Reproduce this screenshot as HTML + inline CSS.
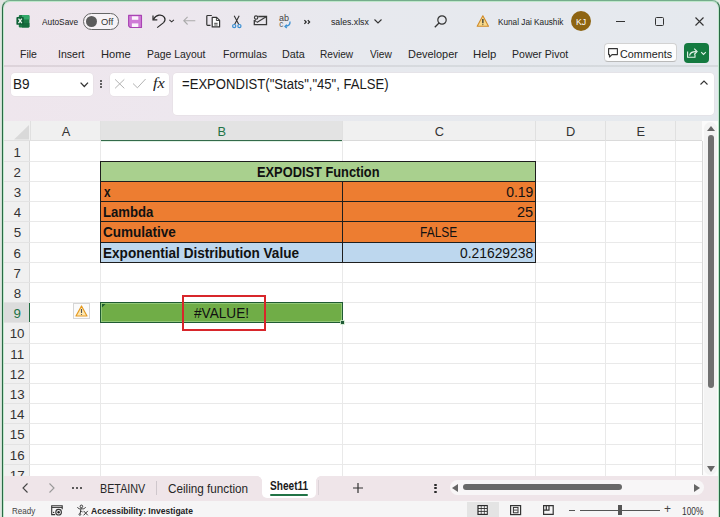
<!DOCTYPE html><html><head><meta charset="utf-8"><style>
*{box-sizing:border-box;margin:0;padding:0}
html,body{width:720px;height:517px;overflow:hidden;background:#f4f4f4;font-family:"Liberation Sans",sans-serif;color:#222}
.a{position:absolute}
.t{position:absolute;white-space:nowrap;line-height:1}
svg{position:absolute;overflow:visible}
</style></head><body>
<div class="a" style="left:0;top:0;width:720px;height:517px;background:linear-gradient(90deg,#efe6ed 0%,#ede7ee 25%,#e7e9ee 50%,#e5e9ee 100%)"></div>
<svg style="left:0;top:0" width="40" height="40" viewBox="0 0 40 40"><rect x="18.8" y="14.9" width="10.6" height="12.5" rx="1.2" fill="#1b7a45"/><path d="M22 14.9 H28.2 A1.2 1.2 0 0 1 29.4 16.1 V19.5 H22 Z" fill="#33a86a"/><path d="M22 23 H29.4 V26.2 A1.2 1.2 0 0 1 28.2 27.4 H22 Z" fill="#136b3b"/><rect x="16.4" y="17" width="7.4" height="7.8" rx="0.9" fill="#0f6136"/><path d="M18.5 18.6 L21.8 23.2 M21.8 18.6 L18.5 23.2" stroke="#eef8f1" stroke-width="1.3"/></svg>
<div class="t" style="left:42.40px;top:17.00px;font-size:9.4px;font-weight:400;color:#222;font-family:'Liberation Sans';font-style:normal;transform:scaleX(0.8878);transform-origin:0 0;">AutoSave</div>
<div class="a" style="left:82.8px;top:13.1px;width:35.8px;height:16.7px;border:1px solid #666;border-radius:9px;background:#f7f3f6"></div>
<div class="a" style="left:85.8px;top:16px;width:11px;height:11px;border-radius:6px;background:#5c5c5c"></div>
<div class="t" style="left:100.66px;top:18.00px;font-size:8.8px;font-weight:400;color:#333;font-family:'Liberation Sans';font-style:normal;transform:scaleX(1.0631);transform-origin:0 0;">Off</div>
<svg style="left:0;top:0" width="180" height="40" viewBox="0 0 180 40"><path d="M128.6 15.4 H141.5 V27.5 H130.2 L128.6 25.9 Z" fill="#cf7ad6" stroke="#a944b3" stroke-width="1.1" stroke-linejoin="round"/><rect x="131.9" y="16.3" width="6.4" height="3.5" fill="#fbf3fb"/><rect x="131.9" y="23.4" width="6.4" height="3.6" fill="#fbf3fb"/><path d="M153 15.5 V19.8 H157.3" fill="none" stroke="#2a2a2a" stroke-width="1.2"/><path d="M153.4 19.4 C156 14.6 162 13.6 164.4 17.4 C165.5 19.3 165.1 21.1 163.6 22.6 L157.2 27.6" fill="none" stroke="#2a2a2a" stroke-width="1.2"/><path d="M169.4 19.8 L171.65 21.8 L173.9 19.8" fill="none" stroke="#333" stroke-width="1.1"/></svg>
<svg style="left:0;top:0" width="250" height="40" viewBox="0 0 250 40"><path d="M195.3 20.7 H183.8 M187.6 16.9 L183.8 20.7 L187.6 24.5" fill="none" stroke="#ababab" stroke-width="1.1"/><path d="M211.8 15.5 H207.6 Q206.8 15.5 206.8 16.3 V24.5 Q206.8 25.3 207.6 25.3 H210.5" fill="none" stroke="#333" stroke-width="1.2"/><path d="M212.2 17.3 H216.6 L219.6 20.3 V26.9 H212.2 Z" fill="#fff" stroke="#333" stroke-width="1.2" stroke-linejoin="round"/><path d="M216.4 17.3 V20.5 H219.6 M214.2 23.3 H217.6 M214.2 25 H217.6" fill="none" stroke="#333" stroke-width="0.9"/><path d="M234.2 15.8 L238.8 24.6 M239.2 15.8 L234.6 24.6" fill="none" stroke="#333" stroke-width="1.1"/><circle cx="234.2" cy="26.1" r="1.6" fill="none" stroke="#3a8fd2" stroke-width="1.2"/><circle cx="239.4" cy="26.1" r="1.6" fill="none" stroke="#3a8fd2" stroke-width="1.2"/></svg>
<svg style="left:0;top:0" width="280" height="40" viewBox="0 0 280 40"><path d="M258.2 16.5 H266.5 V24.6 H254.3 V20" fill="none" stroke="#3a3a3a" stroke-width="1.3"/><path d="M256.8 22.6 L266.2 16.8" stroke="#3a3a3a" stroke-width="1.2"/><circle cx="256.1" cy="17.6" r="1.7" fill="none" stroke="#3a3a3a" stroke-width="1.1"/><path d="M255.4 19.4 V21.6 H256.8" fill="none" stroke="#3a3a3a" stroke-width="0.9"/></svg>
<svg style="left:0;top:0" width="320" height="40" viewBox="0 0 320 40"><text x="278.9" y="21.2" font-size="8.2" font-family="Liberation Sans" fill="#444" textLength="10" lengthAdjust="spacingAndGlyphs">ab</text><text x="279.2" y="27.3" font-size="8.2" font-family="Liberation Sans" fill="#555">c</text><path d="M290 21.5 C290.3 24.5 288.5 26.2 285.2 26.4 M286.8 24.6 L285 26.4 L286.8 28" fill="none" stroke="#3a8fd2" stroke-width="1.3"/><path d="M304.4 20.2 L306.2 22 L304.4 23.8 M307.8 20.2 L309.6 22 L307.8 23.8" fill="none" stroke="#222" stroke-width="1.2"/></svg>
<div class="t" style="left:331.46px;top:18.00px;font-size:9.3px;font-weight:400;color:#222;font-family:'Liberation Sans';font-style:normal;transform:scaleX(0.9386);transform-origin:0 0;">sales.xlsx</div>
<svg style="left:374px;top:19px" width="8" height="5" viewBox="0 0 8 5"><path d="M0.5 0.5 L4 4 L7.5 0.5" fill="none" stroke="#333" stroke-width="1.1"/></svg>
<svg style="left:434px;top:15px" width="13" height="13" viewBox="0 0 13 13"><circle cx="8" cy="5" r="4.2" fill="none" stroke="#333" stroke-width="1.2"/><path d="M5 8 L0.8 12.2" stroke="#333" stroke-width="1.3"/></svg>
<svg style="left:0;top:0" width="500" height="40" viewBox="0 0 500 40"><path d="M482.85 15.8 L488.5 26.2 H477.2 Z" fill="#f8d98a" stroke="#cf8a2a" stroke-width="1.1" stroke-linejoin="round"/><path d="M482.85 19 V23.2" stroke="#4a4a3a" stroke-width="1.5"/><circle cx="482.85" cy="24.6" r="0.6" fill="#4a4a3a"/></svg>
<div class="t" style="left:497.76px;top:18.00px;font-size:9.2px;font-weight:400;color:#222;font-family:'Liberation Sans';font-style:normal;transform:scaleX(0.8945);transform-origin:0 0;">Kunal Jai Kaushik</div>
<div class="a" style="left:571px;top:11px;width:20px;height:20px;border-radius:10px;background:#8e6412"></div>
<div class="t" style="left:575.81px;top:18.00px;font-size:8.6px;font-weight:400;color:#fff;font-family:'Liberation Sans';font-style:normal;transform:scaleX(1.0196);transform-origin:0 0;">KJ</div>
<div class="a" style="left:616px;top:21px;width:9px;height:1px;background:#333"></div>
<div class="a" style="left:655px;top:17px;width:9px;height:8.5px;border:1.1px solid #333;border-radius:1.5px"></div>
<svg style="left:695px;top:17px" width="9" height="9" viewBox="0 0 9 9"><path d="M0.5 0.5 L8.5 8.5 M8.5 0.5 L0.5 8.5" stroke="#333" stroke-width="1.1"/></svg>
<div class="t" style="left:20.18px;top:49.00px;font-size:10.9px;font-weight:400;color:#242424;font-family:'Liberation Sans';font-style:normal;transform:scaleX(0.9650);transform-origin:0 0;">File</div>
<div class="t" style="left:58.47px;top:49.00px;font-size:10.9px;font-weight:400;color:#242424;font-family:'Liberation Sans';font-style:normal;transform:scaleX(0.9718);transform-origin:0 0;">Insert</div>
<div class="t" style="left:101.43px;top:49.00px;font-size:10.9px;font-weight:400;color:#242424;font-family:'Liberation Sans';font-style:normal;transform:scaleX(1.0222);transform-origin:0 0;">Home</div>
<div class="t" style="left:147.49px;top:49.00px;font-size:10.9px;font-weight:400;color:#242424;font-family:'Liberation Sans';font-style:normal;transform:scaleX(0.9553);transform-origin:0 0;">Page Layout</div>
<div class="t" style="left:222.67px;top:49.00px;font-size:10.9px;font-weight:400;color:#242424;font-family:'Liberation Sans';font-style:normal;transform:scaleX(0.9721);transform-origin:0 0;">Formulas</div>
<div class="t" style="left:282.16px;top:49.00px;font-size:10.9px;font-weight:400;color:#242424;font-family:'Liberation Sans';font-style:normal;transform:scaleX(0.9891);transform-origin:0 0;">Data</div>
<div class="t" style="left:319.71px;top:49.00px;font-size:10.9px;font-weight:400;color:#242424;font-family:'Liberation Sans';font-style:normal;transform:scaleX(0.9280);transform-origin:0 0;">Review</div>
<div class="t" style="left:370.00px;top:49.00px;font-size:10.9px;font-weight:400;color:#242424;font-family:'Liberation Sans';font-style:normal;transform:scaleX(0.9337);transform-origin:0 0;">View</div>
<div class="t" style="left:407.64px;top:49.00px;font-size:10.9px;font-weight:400;color:#242424;font-family:'Liberation Sans';font-style:normal;transform:scaleX(1.0045);transform-origin:0 0;">Developer</div>
<div class="t" style="left:473.11px;top:49.00px;font-size:10.9px;font-weight:400;color:#242424;font-family:'Liberation Sans';font-style:normal;transform:scaleX(1.0415);transform-origin:0 0;">Help</div>
<div class="t" style="left:512.18px;top:49.00px;font-size:10.9px;font-weight:400;color:#242424;font-family:'Liberation Sans';font-style:normal;transform:scaleX(0.9679);transform-origin:0 0;">Power Pivot</div>
<div class="a" style="left:604px;top:43.3px;width:72.6px;height:19.2px;border:1px solid #d2d2d2;border-bottom-color:#b9b9b9;border-radius:4px;background:#fdfdfd"></div>
<svg style="left:608px;top:48px" width="10" height="10" viewBox="0 0 10 10"><path d="M0.6 0.6 H9.4 V6.6 H4 L1.5 9 V6.6 H0.6 Z" fill="none" stroke="#333" stroke-width="1.1" stroke-linejoin="round"/></svg>
<div class="t" style="left:620.19px;top:49.00px;font-size:10.9px;font-weight:400;color:#242424;font-family:'Liberation Sans';font-style:normal;transform:scaleX(0.9895);transform-origin:0 0;">Comments</div>
<div class="a" style="left:683.5px;top:43px;width:25.7px;height:19.6px;border-radius:4px;background:#147a40"></div>
<svg style="left:0;top:0" width="720" height="70" viewBox="0 0 720 70"><path d="M687.6 51.5 V57.3 H695 V54.6" fill="none" stroke="#e6f4ea" stroke-width="1.1"/><path d="M689.6 55.6 Q690 51.6 696 51.6" fill="none" stroke="#e6f4ea" stroke-width="1.1"/><path d="M694.2 48.7 L697.1 51.6 L694.2 54.5" fill="none" stroke="#e6f4ea" stroke-width="1.1"/><path d="M701.2 52.2 L703.5 54.4 L705.8 52.2" fill="none" stroke="#e6f4ea" stroke-width="1.1"/></svg>
<div class="a" style="left:0;top:65px;width:720px;height:1.6px;background:linear-gradient(90deg,#ddd3da 0%,#dbd6dd 35%,#d6dade 60%,#d5d9dd 100%)"></div>
<div class="a" style="left:10.5px;top:72.5px;width:82px;height:23px;background:#fff;border-radius:4px;box-shadow:0 0 0 0.5px #e4dde2"></div>
<div class="t" style="left:13.34px;top:78.00px;font-size:13.8px;font-weight:400;color:#1a1a1a;font-family:'Liberation Sans';font-style:normal;transform:scaleX(0.9841);transform-origin:0 0;">B9</div>
<svg style="left:80px;top:81.8px" width="9" height="6" viewBox="0 0 9 6"><path d="M0.6 0.6 L4.3 4.5 L8 0.6" fill="none" stroke="#333" stroke-width="1.25"/></svg>
<div class="a" style="left:100.2px;top:79.7px;width:1.9px;height:1.9px;background:#333;border-radius:1px"></div>
<div class="a" style="left:100.2px;top:83.0px;width:1.9px;height:1.9px;background:#333;border-radius:1px"></div>
<div class="a" style="left:100.2px;top:86.3px;width:1.9px;height:1.9px;background:#333;border-radius:1px"></div>
<div class="a" style="left:110px;top:72.5px;width:59px;height:23px;background:#fff;border-radius:4px;box-shadow:0 0 0 0.5px #e4dde2"></div>
<svg style="left:0;top:0" width="170" height="100" viewBox="0 0 170 100"><path d="M115.1 79.4 L124.3 88.3 M124.3 79.4 L115.1 88.3" stroke="#b3b3b3" stroke-width="1"/><path d="M133 83.5 L137.4 87.8 L145.6 79" fill="none" stroke="#b3b3b3" stroke-width="1"/></svg>
<div class="t" style="left:153.30px;top:76.00px;font-size:14.5px;font-weight:400;color:#222;font-family:'Liberation Serif';font-style:italic;transform:scaleX(1.1280);transform-origin:0 0;">fx</div>
<div class="a" style="left:173px;top:73px;width:541px;height:42px;background:#fff;border-radius:4px;box-shadow:0 0 0 0.5px #e4dde2"></div>
<div class="t" style="left:182.49px;top:78.00px;font-size:13.8px;font-weight:400;color:#1a1a1a;font-family:'Liberation Sans';font-style:normal;transform:scaleX(0.9488);transform-origin:0 0;">=EXPONDIST("Stats","45", FALSE)</div>
<svg style="left:700px;top:80px" width="8" height="5" viewBox="0 0 8 5"><path d="M0.5 4.5 L4 1 L7.5 4.5" fill="none" stroke="#333" stroke-width="1.1"/></svg>
<div class="a" style="left:4px;top:141px;width:698px;height:335px;background:#fff"></div>
<div class="a" style="left:4px;top:121px;width:698px;height:20px;background:#f0f0f0"></div>
<div class="a" style="left:100px;top:121px;width:242px;height:20px;background:#e3e3e3"></div>
<div class="a" style="left:100px;top:139.9px;width:242px;height:1.6px;background:#336a4a;box-shadow:0 0.8px 0.6px #d8eedd"></div>
<svg style="left:14px;top:124.5px" width="15" height="14.5" viewBox="0 0 15 14.5"><path d="M15 0 V14.5 H0 Z" fill="#d9d9d9"/></svg>
<div class="a" style="left:4px;top:140px;width:96px;height:1px;background:#e0e0e0"></div>
<div class="a" style="left:342px;top:140px;width:360px;height:1px;background:#dadada"></div>
<div class="a" style="left:30px;top:121px;width:1px;height:20px;background:#e0e0e0"></div>
<div class="a" style="left:100px;top:121px;width:1px;height:20px;background:#e0e0e0"></div>
<div class="a" style="left:342px;top:121px;width:1px;height:20px;background:#e0e0e0"></div>
<div class="a" style="left:535px;top:121px;width:1px;height:20px;background:#e0e0e0"></div>
<div class="a" style="left:605px;top:121px;width:1px;height:20px;background:#e0e0e0"></div>
<div class="a" style="left:675px;top:121px;width:1px;height:20px;background:#e0e0e0"></div>
<div class="t" style="left:61.70px;top:126.00px;font-size:12.8px;font-weight:400;color:#333;font-family:'Liberation Sans';font-style:normal;">A</div>
<div class="t" style="left:217.50px;top:126.00px;font-size:12.8px;font-weight:400;color:#217346;font-family:'Liberation Sans';font-style:normal;">B</div>
<div class="t" style="left:434.80px;top:126.00px;font-size:12.8px;font-weight:400;color:#333;font-family:'Liberation Sans';font-style:normal;">C</div>
<div class="t" style="left:566.10px;top:126.00px;font-size:12.8px;font-weight:400;color:#333;font-family:'Liberation Sans';font-style:normal;">D</div>
<div class="t" style="left:636.50px;top:126.00px;font-size:12.8px;font-weight:400;color:#333;font-family:'Liberation Sans';font-style:normal;">E</div>
<div class="a" style="left:4px;top:141px;width:26px;height:335px;background:#f0f0f0"></div>
<div class="t" style="left:13.46px;top:146.00px;font-size:13.3px;font-weight:400;color:#333;font-family:'Liberation Sans';font-style:normal;">1</div>
<div class="t" style="left:13.56px;top:166.00px;font-size:13.3px;font-weight:400;color:#333;font-family:'Liberation Sans';font-style:normal;">2</div>
<div class="t" style="left:13.66px;top:186.00px;font-size:13.3px;font-weight:400;color:#333;font-family:'Liberation Sans';font-style:normal;">3</div>
<div class="t" style="left:13.66px;top:206.00px;font-size:13.3px;font-weight:400;color:#333;font-family:'Liberation Sans';font-style:normal;">4</div>
<div class="t" style="left:13.66px;top:226.00px;font-size:13.3px;font-weight:400;color:#333;font-family:'Liberation Sans';font-style:normal;">5</div>
<div class="t" style="left:13.56px;top:247.00px;font-size:13.3px;font-weight:400;color:#333;font-family:'Liberation Sans';font-style:normal;">6</div>
<div class="t" style="left:13.56px;top:267.00px;font-size:13.3px;font-weight:400;color:#333;font-family:'Liberation Sans';font-style:normal;">7</div>
<div class="t" style="left:13.66px;top:287.00px;font-size:13.3px;font-weight:400;color:#333;font-family:'Liberation Sans';font-style:normal;">8</div>
<div class="a" style="left:4px;top:302px;width:26px;height:20.5px;background:#dcdcdc"></div>
<div class="a" style="left:28.6px;top:302px;width:1.7px;height:20.5px;background:#1f6b40"></div>
<div class="t" style="left:13.56px;top:307.00px;font-size:13.3px;font-weight:400;color:#217346;font-family:'Liberation Sans';font-style:normal;">9</div>
<div class="t" style="left:9.65px;top:327.00px;font-size:13.3px;font-weight:400;color:#333;font-family:'Liberation Sans';font-style:normal;">10</div>
<div class="t" style="left:10.25px;top:348.00px;font-size:13.3px;font-weight:400;color:#333;font-family:'Liberation Sans';font-style:normal;">11</div>
<div class="t" style="left:9.76px;top:368.00px;font-size:13.3px;font-weight:400;color:#333;font-family:'Liberation Sans';font-style:normal;">12</div>
<div class="t" style="left:9.76px;top:388.00px;font-size:13.3px;font-weight:400;color:#333;font-family:'Liberation Sans';font-style:normal;">13</div>
<div class="t" style="left:9.65px;top:408.00px;font-size:13.3px;font-weight:400;color:#333;font-family:'Liberation Sans';font-style:normal;">14</div>
<div class="t" style="left:9.76px;top:428.00px;font-size:13.3px;font-weight:400;color:#333;font-family:'Liberation Sans';font-style:normal;">15</div>
<div class="t" style="left:9.76px;top:449.00px;font-size:13.3px;font-weight:400;color:#333;font-family:'Liberation Sans';font-style:normal;">16</div>
<div class="t" style="left:9.76px;top:469.00px;font-size:13.3px;font-weight:400;color:#333;font-family:'Liberation Sans';font-style:normal;">17</div>
<div class="a" style="left:29px;top:141px;width:1px;height:161px;background:#dadada"></div>
<div class="a" style="left:29px;top:323px;width:1px;height:153px;background:#dadada"></div>
<div class="a" style="left:4px;top:161px;width:26px;height:1px;background:#e3e3e3"></div>
<div class="a" style="left:30px;top:161px;width:672px;height:1px;background:#e9e9e9"></div>
<div class="a" style="left:4px;top:181px;width:26px;height:1px;background:#e3e3e3"></div>
<div class="a" style="left:30px;top:181px;width:672px;height:1px;background:#e9e9e9"></div>
<div class="a" style="left:4px;top:201px;width:26px;height:1px;background:#e3e3e3"></div>
<div class="a" style="left:30px;top:201px;width:672px;height:1px;background:#e9e9e9"></div>
<div class="a" style="left:4px;top:221px;width:26px;height:1px;background:#e3e3e3"></div>
<div class="a" style="left:30px;top:221px;width:672px;height:1px;background:#e9e9e9"></div>
<div class="a" style="left:4px;top:242px;width:26px;height:1px;background:#e3e3e3"></div>
<div class="a" style="left:30px;top:242px;width:672px;height:1px;background:#e9e9e9"></div>
<div class="a" style="left:4px;top:262px;width:26px;height:1px;background:#e3e3e3"></div>
<div class="a" style="left:30px;top:262px;width:672px;height:1px;background:#e9e9e9"></div>
<div class="a" style="left:4px;top:282px;width:26px;height:1px;background:#e3e3e3"></div>
<div class="a" style="left:30px;top:282px;width:672px;height:1px;background:#e9e9e9"></div>
<div class="a" style="left:4px;top:302px;width:26px;height:1px;background:#e3e3e3"></div>
<div class="a" style="left:30px;top:302px;width:672px;height:1px;background:#e9e9e9"></div>
<div class="a" style="left:4px;top:322px;width:26px;height:1px;background:#e3e3e3"></div>
<div class="a" style="left:30px;top:322px;width:672px;height:1px;background:#e9e9e9"></div>
<div class="a" style="left:4px;top:343px;width:26px;height:1px;background:#e3e3e3"></div>
<div class="a" style="left:30px;top:343px;width:672px;height:1px;background:#e9e9e9"></div>
<div class="a" style="left:4px;top:363px;width:26px;height:1px;background:#e3e3e3"></div>
<div class="a" style="left:30px;top:363px;width:672px;height:1px;background:#e9e9e9"></div>
<div class="a" style="left:4px;top:383px;width:26px;height:1px;background:#e3e3e3"></div>
<div class="a" style="left:30px;top:383px;width:672px;height:1px;background:#e9e9e9"></div>
<div class="a" style="left:4px;top:403px;width:26px;height:1px;background:#e3e3e3"></div>
<div class="a" style="left:30px;top:403px;width:672px;height:1px;background:#e9e9e9"></div>
<div class="a" style="left:4px;top:423px;width:26px;height:1px;background:#e3e3e3"></div>
<div class="a" style="left:30px;top:423px;width:672px;height:1px;background:#e9e9e9"></div>
<div class="a" style="left:4px;top:444px;width:26px;height:1px;background:#e3e3e3"></div>
<div class="a" style="left:30px;top:444px;width:672px;height:1px;background:#e9e9e9"></div>
<div class="a" style="left:4px;top:464px;width:26px;height:1px;background:#e3e3e3"></div>
<div class="a" style="left:30px;top:464px;width:672px;height:1px;background:#e9e9e9"></div>
<div class="a" style="left:4px;top:484px;width:26px;height:1px;background:#e3e3e3"></div>
<div class="a" style="left:30px;top:484px;width:672px;height:1px;background:#e9e9e9"></div>
<div class="a" style="left:100px;top:141px;width:1px;height:335px;background:#e9e9e9"></div>
<div class="a" style="left:342px;top:141px;width:1px;height:335px;background:#e9e9e9"></div>
<div class="a" style="left:535px;top:141px;width:1px;height:335px;background:#e9e9e9"></div>
<div class="a" style="left:605px;top:141px;width:1px;height:335px;background:#e9e9e9"></div>
<div class="a" style="left:675px;top:141px;width:1px;height:335px;background:#e9e9e9"></div>
<div class="a" style="left:100px;top:161px;width:436px;height:21px;background:#a9d08e;border:1px solid #1e1e1e"></div>
<div class="a" style="left:100px;top:181px;width:243px;height:21px;background:#ed7d31;border:1px solid #1e1e1e"></div>
<div class="a" style="left:342px;top:181px;width:194px;height:21px;background:#ed7d31;border:1px solid #1e1e1e"></div>
<div class="a" style="left:100px;top:201px;width:243px;height:21px;background:#ed7d31;border:1px solid #1e1e1e"></div>
<div class="a" style="left:342px;top:201px;width:194px;height:21px;background:#ed7d31;border:1px solid #1e1e1e"></div>
<div class="a" style="left:100px;top:221px;width:243px;height:22px;background:#ed7d31;border:1px solid #1e1e1e"></div>
<div class="a" style="left:342px;top:221px;width:194px;height:22px;background:#ed7d31;border:1px solid #1e1e1e"></div>
<div class="a" style="left:100px;top:242px;width:243px;height:21px;background:#bdd7ee;border:1px solid #1e1e1e"></div>
<div class="a" style="left:342px;top:242px;width:194px;height:21px;background:#bdd7ee;border:1px solid #1e1e1e"></div>
<div class="t" style="left:257.00px;top:165.00px;font-size:14px;font-weight:700;color:#111;font-family:'Liberation Sans';font-style:normal;transform:scaleX(0.9158);transform-origin:0 0;">EXPODIST Function</div>
<div class="t" style="left:103.60px;top:185.00px;font-size:14px;font-weight:700;color:#111;font-family:'Liberation Sans';font-style:normal;transform:scaleX(0.8381);transform-origin:0 0;">x</div>
<div class="t" style="left:102.88px;top:205.00px;font-size:14px;font-weight:700;color:#111;font-family:'Liberation Sans';font-style:normal;transform:scaleX(0.9378);transform-origin:0 0;">Lambda</div>
<div class="t" style="left:103.28px;top:225.00px;font-size:14px;font-weight:700;color:#111;font-family:'Liberation Sans';font-style:normal;transform:scaleX(0.9655);transform-origin:0 0;">Cumulative</div>
<div class="t" style="left:102.85px;top:246.00px;font-size:14px;font-weight:700;color:#111;font-family:'Liberation Sans';font-style:normal;transform:scaleX(0.9690);transform-origin:0 0;">Exponential Distribution Value</div>
<div class="t" style="left:506.16px;top:185.00px;font-size:14px;font-weight:400;color:#111;font-family:'Liberation Sans';font-style:normal;">0.19</div>
<div class="t" style="left:517.32px;top:205.00px;font-size:14px;font-weight:400;color:#111;font-family:'Liberation Sans';font-style:normal;transform:scaleX(1.0384);transform-origin:0 0;">25</div>
<div class="t" style="left:420.07px;top:225.00px;font-size:14px;font-weight:400;color:#111;font-family:'Liberation Sans';font-style:normal;transform:scaleX(0.8545);transform-origin:0 0;">FALSE</div>
<div class="t" style="left:460.27px;top:246.00px;font-size:14px;font-weight:400;color:#111;font-family:'Liberation Sans';font-style:normal;transform:scaleX(0.9896);transform-origin:0 0;">0.21629238</div>
<div class="a" style="left:100px;top:302px;width:243px;height:21px;background:#70ad47;border:1px solid #1f5a33;box-shadow:inset 0 0 0 0.8px #9ccf86"></div>
<div class="a" style="left:340.6px;top:320.7px;width:3.8px;height:3.6px;background:#1f5a36;box-shadow:0 0 0 0.8px #cfe8cc"></div>
<svg style="left:101.5px;top:303.5px" width="5" height="5" viewBox="0 0 5 5"><path d="M0 0 H3.5 L0 3.5 Z" fill="#1d5c2e"/></svg>
<div class="t" style="left:194.40px;top:306.00px;font-size:14px;font-weight:400;color:#111;font-family:'Liberation Sans';font-style:normal;transform:scaleX(0.9732);transform-origin:0 0;">#VALUE!</div>
<div class="a" style="left:181.9px;top:294.9px;width:84.2px;height:36px;border:2.4px solid #d8262b"></div>
<div class="a" style="left:73.3px;top:303.3px;width:16.3px;height:16px;background:#fbfbfb;border:1px solid #d6d6d6"></div>
<svg style="left:74.8px;top:305px" width="13" height="12" viewBox="0 0 13 12"><path d="M6.5 1 L12 11 H1 Z" fill="#fde7b0" stroke="#e59a22" stroke-width="1.2" stroke-linejoin="round"/><path d="M6.5 4 V8" stroke="#555" stroke-width="1.1"/><circle cx="6.5" cy="9.5" r="0.6" fill="#555"/></svg>
<div class="a" style="left:702px;top:121px;width:16px;height:355px;background:#fbfbfb"></div>
<div class="a" style="left:703.5px;top:122px;width:13.5px;height:353px;background:#f3f3f3;border-radius:7px"></div>
<div class="a" style="left:702px;top:141px;width:1px;height:334px;background:#d9d9d9"></div>
<svg style="left:707px;top:126px" width="8" height="5" viewBox="0 0 8 5"><path d="M0 5 L4 0 L8 5 Z" fill="#666"/></svg>
<div class="a" style="left:707.5px;top:135px;width:6.5px;height:253px;background:#707070;border-radius:3.5px"></div>
<svg style="left:707px;top:466px" width="8" height="6" viewBox="0 0 8 6"><path d="M0 0 L4 6 L8 0 Z" fill="#666"/></svg>
<div class="a" style="left:0;top:475.5px;width:720px;height:25px;background:#efe5e9"></div>
<svg style="left:22px;top:482.5px" width="6" height="10" viewBox="0 0 6 10"><path d="M5.5 0.5 L1 5 L5.5 9.5" fill="none" stroke="#444" stroke-width="1.1"/></svg>
<svg style="left:49px;top:483px" width="6" height="10" viewBox="0 0 6 10"><path d="M0.5 0.5 L5 5 L0.5 9.5" fill="none" stroke="#999" stroke-width="1.1"/></svg>
<div class="a" style="left:72.2px;top:486.6px;width:2.3px;height:2.3px;border-radius:1.2px;background:#2a2a2a"></div>
<div class="a" style="left:76.2px;top:486.6px;width:2.3px;height:2.3px;border-radius:1.2px;background:#2a2a2a"></div>
<div class="a" style="left:80.2px;top:486.6px;width:2.3px;height:2.3px;border-radius:1.2px;background:#2a2a2a"></div>
<div class="t" style="left:100.16px;top:484.00px;font-size:11.9px;font-weight:400;color:#262626;font-family:'Liberation Sans';font-style:normal;transform:scaleX(0.9052);transform-origin:0 0;">BETAINV</div>
<div class="a" style="left:156px;top:481px;width:1px;height:14px;background:#cfc7cc"></div>
<div class="t" style="left:167.85px;top:484.00px;font-size:11.9px;font-weight:400;color:#262626;font-family:'Liberation Sans';font-style:normal;transform:scaleX(0.9845);transform-origin:0 0;">Ceiling function</div>
<div class="a" style="left:262px;top:475px;width:54px;height:22.5px;background:#fff;border-radius:0 0 5px 5px"></div>
<div class="a" style="left:257px;top:475.5px;width:5px;height:5px;background:radial-gradient(circle at 0 100%,#efe5e9 4.6px,#fff 5.2px)"></div>
<div class="a" style="left:316px;top:475.5px;width:5px;height:5px;background:radial-gradient(circle at 100% 100%,#efe5e9 4.6px,#fff 5.2px)"></div>
<div class="a" style="left:318px;top:480px;width:1px;height:15px;background:#dcd3d8"></div>
<div class="t" style="left:270.24px;top:481.00px;font-size:11.9px;font-weight:700;color:#1a1a1a;font-family:'Liberation Sans';font-style:normal;transform:scaleX(0.8494);transform-origin:0 0;">Sheet11</div>
<div class="a" style="left:270px;top:493.5px;width:38px;height:2px;background:#217346;border-radius:1px"></div>
<svg style="left:352.5px;top:482.5px" width="10" height="10" viewBox="0 0 10 10"><path d="M5 0 V10 M0 5 H10" stroke="#333" stroke-width="1.2"/></svg>
<div class="a" style="left:434.4px;top:483.6px;width:2.2px;height:2.2px;border-radius:1.1px;background:#2a2a2a"></div>
<div class="a" style="left:434.4px;top:487.1px;width:2.2px;height:2.2px;border-radius:1.1px;background:#2a2a2a"></div>
<div class="a" style="left:434.4px;top:490.6px;width:2.2px;height:2.2px;border-radius:1.1px;background:#2a2a2a"></div>
<div class="a" style="left:450px;top:480px;width:254px;height:15px;background:#f8f6f7;border-radius:7.5px"></div>
<svg style="left:452px;top:483.5px" width="6" height="8" viewBox="0 0 6 8"><path d="M6 0 L0 4 L6 8 Z" fill="#666"/></svg>
<div class="a" style="left:462.5px;top:483.5px;width:159.5px;height:6.6px;background:#686868;border-radius:3.3px"></div>
<svg style="left:694px;top:483.5px" width="6" height="8" viewBox="0 0 6 8"><path d="M0 0 L6 4 L0 8 Z" fill="#666"/></svg>
<div class="a" style="left:0;top:500.5px;width:720px;height:17px;background:#f6f5f6"></div>
<div class="t" style="left:12.27px;top:506.00px;font-size:9.6px;font-weight:400;color:#444;font-family:'Liberation Sans';font-style:normal;transform:scaleX(0.8370);transform-origin:0 0;">Ready</div>
<svg style="left:0;top:0" width="100" height="517" viewBox="0 0 100 517"><path d="M55.2 514.6 H51.7 V505.7 H62.2 V509.3" fill="none" stroke="#333" stroke-width="1.1"/><path d="M51.7 507.4 H62.2" stroke="#333" stroke-width="1"/><circle cx="53.6" cy="512.4" r="0.7" fill="#333"/><circle cx="58.6" cy="512.2" r="2.8" fill="#f6f5f6" stroke="#333" stroke-width="1.1"/><circle cx="58.6" cy="512.2" r="1.2" fill="#222"/><circle cx="81.4" cy="506.4" r="1.3" fill="none" stroke="#333" stroke-width="1"/><path d="M77.5 507.2 C78.5 509.2 80 509 81.4 508.6 C82.8 509 84.3 509.2 85.6 507.2" fill="none" stroke="#333" stroke-width="1"/><path d="M81 508.8 L80.2 513.3" stroke="#333" stroke-width="1"/><circle cx="79.9" cy="514.4" r="0.9" fill="none" stroke="#333" stroke-width="0.9"/><path d="M81.3 511 L82.6 512.3 M83.6 510.9 L87.8 515.3 M87.8 510.9 L83.6 515.3" fill="none" stroke="#333" stroke-width="1"/></svg>
<div class="t" style="left:91.47px;top:506.00px;font-size:9.7px;font-weight:700;color:#222;font-family:'Liberation Sans';font-style:normal;transform:scaleX(0.8804);transform-origin:0 0;">Accessibility: Investigate</div>
<div class="a" style="left:467px;top:502.2px;width:32px;height:15px;background:#e4e4e4"></div>
<svg style="left:0;top:0" width="720" height="517" viewBox="0 0 720 517"><rect x="477.4" y="505" width="10.4" height="10" fill="#2a2a2a"/><g fill="#f8f8f8"><rect x="478.6" y="506.2" width="2.2" height="1.9"/><rect x="481.5" y="506.2" width="2.4" height="1.9"/><rect x="484.6" y="506.2" width="2.2" height="1.9"/><rect x="478.6" y="509" width="2.2" height="1.9"/><rect x="481.5" y="509" width="2.4" height="1.9"/><rect x="484.6" y="509" width="2.2" height="1.9"/><rect x="478.6" y="511.8" width="2.2" height="2"/><rect x="481.5" y="511.8" width="2.4" height="2"/><rect x="484.6" y="511.8" width="2.2" height="2"/></g><rect x="510.6" y="505.6" width="10" height="9" fill="none" stroke="#333" stroke-width="1.2"/><rect x="513.4" y="507.4" width="4.6" height="5.4" fill="none" stroke="#333" stroke-width="1"/><path d="M514 510.1 H517.5" stroke="#333" stroke-width="0.9"/><path d="M543.6 505.6 H553.2 V514.4 H543.6 Z M543.6 510.2 H549 V505.6 M546.3 505.6 V510.2" fill="none" stroke="#333" stroke-width="1.2"/></svg>
<div class="a" style="left:569px;top:509.5px;width:6px;height:1px;background:#555"></div>
<div class="a" style="left:580px;top:509.5px;width:80px;height:1px;background:#555"></div>
<div class="a" style="left:618px;top:505px;width:4px;height:10px;background:#555"></div>
<div class="t" style="left:664px;top:503px;font-size:12px;color:#444">+</div>
<div class="t" style="left:682.18px;top:507.00px;font-size:10px;font-weight:400;color:#333;font-family:'Liberation Sans';font-style:normal;transform:scaleX(0.8356);transform-origin:0 0;">100%</div>
<svg style="left:0;top:0" width="720" height="517" viewBox="0 0 720 517"><path d="M0 0 H10 A8 8 0 0 0 2 8 V517 H0 Z" fill="#e3e3e3"/><path d="M720 0 H711 A8 8 0 0 1 720 8 Z" fill="#e4ece6"/></svg>
<div class="a" style="left:2px;top:0.3px;width:718px;height:540px;border:1.6px solid #2a6a46;border-top-color:#74ad8b;border-radius:8px;box-shadow:0 0 0 0.5px #b5ddc0, inset 0 0 0 1px #bfe8cb"></div>
</body></html>
